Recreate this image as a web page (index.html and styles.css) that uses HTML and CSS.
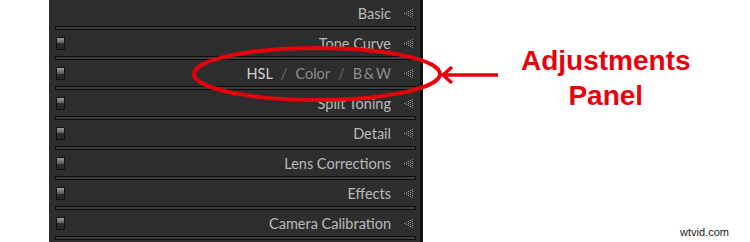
FILE: index.html
```html
<!DOCTYPE html>
<html lang="en">
<head>
  <meta charset="UTF-8">
  <meta name="viewport" content="width=device-width, initial-scale=1.0">
  <title>Adjustments Panel</title>
  <link rel="stylesheet" href="styles.css">
</head>
<body>
  <div class="page">
    <div class="panel">
      <div class="row">
        <span class="title">Basic</span>
        <svg class="arrow-icon" width="9" height="11" viewBox="0 0 9 11"><use href="#dots"/></svg>
      </div>
      <div class="sep"></div>
      <div class="row">
        <span class="toggle"></span>
        <span class="title">Tone Curve</span>
        <svg class="arrow-icon" width="9" height="11" viewBox="0 0 9 11"><use href="#dots"/></svg>
      </div>
      <div class="sep"></div>
      <div class="row">
        <span class="toggle"></span>
        <span class="title"><span class="on">HSL</span><span class="slash">/</span><span class="dim">Color</span><span class="slash">/</span><span class="dim">B&thinsp;&amp;&thinsp;W</span></span>
        <svg class="arrow-icon" width="9" height="11" viewBox="0 0 9 11"><use href="#dots"/></svg>
      </div>
      <div class="sep"></div>
      <div class="row">
        <span class="toggle"></span>
        <span class="title">Split Toning</span>
        <svg class="arrow-icon" width="9" height="11" viewBox="0 0 9 11"><use href="#dots"/></svg>
      </div>
      <div class="sep"></div>
      <div class="row">
        <span class="toggle"></span>
        <span class="title">Detail</span>
        <svg class="arrow-icon" width="9" height="11" viewBox="0 0 9 11"><use href="#dots"/></svg>
      </div>
      <div class="sep"></div>
      <div class="row">
        <span class="toggle"></span>
        <span class="title">Lens Corrections</span>
        <svg class="arrow-icon" width="9" height="11" viewBox="0 0 9 11"><use href="#dots"/></svg>
      </div>
      <div class="sep"></div>
      <div class="row">
        <span class="toggle"></span>
        <span class="title">Effects</span>
        <svg class="arrow-icon" width="9" height="11" viewBox="0 0 9 11"><use href="#dots"/></svg>
      </div>
      <div class="sep"></div>
      <div class="row">
        <span class="toggle"></span>
        <span class="title">Camera Calibration</span>
        <svg class="arrow-icon" width="9" height="11" viewBox="0 0 9 11"><use href="#dots"/></svg>
      </div>
      <div class="sep"></div>
    </div>

    <div class="label">
      <div>Adjustments</div>
      <div>Panel</div>
    </div>

    <svg class="markup" width="750" height="242" viewBox="0 0 750 242">
      <defs>
        <g id="dots" fill="#9a9a9a"><rect x="0" y="5" width="1" height="1"/><rect x="2" y="4" width="1" height="1"/><rect x="2" y="6" width="1" height="1"/><rect x="4" y="3" width="1" height="1"/><rect x="4" y="5" width="1" height="1"/><rect x="4" y="7" width="1" height="1"/><rect x="6" y="2" width="1" height="1"/><rect x="6" y="4" width="1" height="1"/><rect x="6" y="6" width="1" height="1"/><rect x="6" y="8" width="1" height="1"/><rect x="8" y="1" width="1" height="1"/><rect x="8" y="3" width="1" height="1"/><rect x="8" y="5" width="1" height="1"/><rect x="8" y="7" width="1" height="1"/><rect x="8" y="9" width="1" height="1"/></g>
      </defs>
      <ellipse cx="317" cy="74" rx="123" ry="26" fill="none" stroke="#e8000b" stroke-width="4"/>
      <path d="M443 75 H498 M452 67 L443 75 L452 83" fill="none" stroke="#e8000b" stroke-width="3.5"/>
    </svg>

    <span class="credit">wtvid.com</span>
  </div>
</body>
</html>
```

FILE: styles.css
```css
*, *::before, *::after {
  box-sizing: border-box;
}
body {
  margin: 0;
  background: #fff;
}
.page {
  position: relative;
  display: flex;
  width: 750px;
  height: 242px;
  overflow: hidden;
}
.panel {
  width: 374px;
  height: 242px;
  margin-left: 49px;
  background: #2d2d2d;
  border-right: 3px solid #121212;
  font-family: Lato, "Open Sans", sans-serif;
}
.row {
  display: flex;
  align-items: center;
  height: 26px;
  padding: 0 7px 0 7px;
}
.toggle {
  width: 9px;
  height: 13px;
  border: 1px solid #111;
  background: linear-gradient(#9a9a9a, #5a5a5a 50%, #2e2e2e 50%, #262626);
}
.title {
  margin-left: auto;
  margin-right: 13px;
  font-size: 14.5px;
  color: #bababa;
  white-space: nowrap;
}
.title .on {
  color: #cfcfcf;
}
.title .dim {
  color: #8c8c8c;
}
.title .slash {
  margin: 0 8px;
  color: #6e6e6e;
}
.arrow-icon {
  display: block;
  flex: none;
}
.sep {
  height: 4px;
  margin: 0 4px 0 6px;
  border: 1px solid #0b0b0b;
  background: #3e3e3e;
}
.label {
  margin: 43px 0 0 98px;
  font-family: "Liberation Sans", Arial, sans-serif;
  font-weight: bold;
  font-size: 28px;
  line-height: 35px;
  color: #e8000b;
  text-align: center;
}
.markup {
  position: absolute;
  left: 0;
  top: 0;
  pointer-events: none;
}
.credit {
  position: absolute;
  right: 21px;
  top: 226px;
  font-family: "Liberation Sans", Arial, sans-serif;
  font-size: 11px;
  color: #222;
}
```
